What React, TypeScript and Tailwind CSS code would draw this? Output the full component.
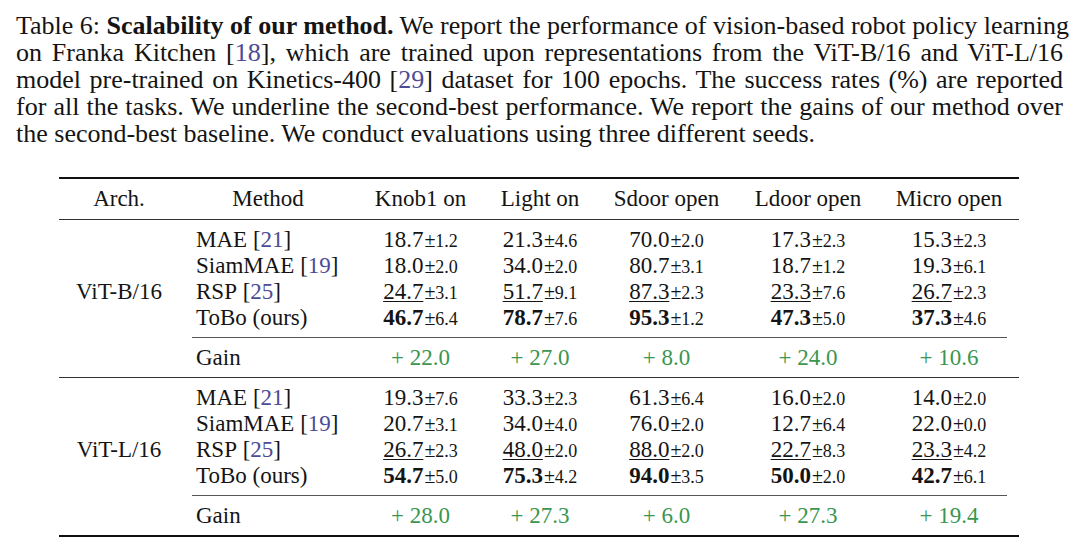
import React from "react";

type Cell = [string, string];
type Row = { m: string; c?: string; kind?: "u" | "b"; v: Cell[] };

const block1: Row[] = [
  { m: "MAE", c: "21", v: [["18.7", "1.2"], ["21.3", "4.6"], ["70.0", "2.0"], ["17.3", "2.3"], ["15.3", "2.3"]] },
  { m: "SiamMAE", c: "19", v: [["18.0", "2.0"], ["34.0", "2.0"], ["80.7", "3.1"], ["18.7", "1.2"], ["19.3", "6.1"]] },
  { m: "RSP", c: "25", kind: "u", v: [["24.7", "3.1"], ["51.7", "9.1"], ["87.3", "2.3"], ["23.3", "7.6"], ["26.7", "2.3"]] },
  { m: "ToBo (ours)", kind: "b", v: [["46.7", "6.4"], ["78.7", "7.6"], ["95.3", "1.2"], ["47.3", "5.0"], ["37.3", "4.6"]] },
];
const block2: Row[] = [
  { m: "MAE", c: "21", v: [["19.3", "7.6"], ["33.3", "2.3"], ["61.3", "6.4"], ["16.0", "2.0"], ["14.0", "2.0"]] },
  { m: "SiamMAE", c: "19", v: [["20.7", "3.1"], ["34.0", "4.0"], ["76.0", "2.0"], ["12.7", "6.4"], ["22.0", "0.0"]] },
  { m: "RSP", c: "25", kind: "u", v: [["26.7", "2.3"], ["48.0", "2.0"], ["88.0", "2.0"], ["22.7", "8.3"], ["23.3", "4.2"]] },
  { m: "ToBo (ours)", kind: "b", v: [["54.7", "5.0"], ["75.3", "4.2"], ["94.0", "3.5"], ["50.0", "2.0"], ["42.7", "6.1"]] },
];
const gain1 = ["+ 22.0", "+ 27.0", "+ 8.0", "+ 24.0", "+ 10.6"];
const gain2 = ["+ 28.0", "+ 27.3", "+ 6.0", "+ 27.3", "+ 19.4"];

const cols = "grid grid-cols-[120px_178px_127px_112px_141px_142px_140px]";

function Cite({ n }: { n: string }) {
  return (
    <>
      [<span className="text-[#4c4c96]">{n}</span>]
    </>
  );
}

function Block({ arch, rows, gain }: { arch: string; rows: Row[]; gain: string[] }) {
  return (
    <>
      <div className={`${cols} grid-rows-[repeat(4,26px)] pt-[7px] pb-[6px]`}>
        <div className="col-start-1 row-start-3 flex items-center justify-center">{arch}</div>
        {rows.map((r, i) => (
          <React.Fragment key={i}>
            <div className="col-start-2 flex items-center pl-[17px] whitespace-nowrap">
              {r.m}
              {r.c && (
                <>
                  &nbsp;
                  <Cite n={r.c} />
                </>
              )}
            </div>
            {r.v.map((v, j) => (
              <div key={j} className="flex items-baseline justify-center whitespace-nowrap">
                <span
                  className={
                    r.kind === "b"
                      ? "font-bold"
                      : r.kind === "u"
                      ? "underline decoration-1 underline-offset-[2px]"
                      : ""
                  }
                >
                  {v[0]}
                </span>
                <span className="text-[20px] ml-[1px]">±</span>
                <span className="text-[18px]">{v[1]}</span>
              </div>
            ))}
          </React.Fragment>
        ))}
      </div>
      <div className="ml-[133px] mr-[12px] border-t border-[#555]" />
      <div className={`${cols} h-[39px]`}>
        <div />
        <div className="flex items-center pl-[17px]">Gain</div>
        {gain.map((g, i) => (
          <div key={i} className="flex items-center justify-center text-[#3a9650]">
            {g}
          </div>
        ))}
      </div>
    </>
  );
}

export default function App() {
  const line = "text-justify [text-align-last:justify] whitespace-nowrap";
  return (
    <div className="w-[1080px] h-[551px] bg-white text-[#141414] font-['Liberation_Serif',serif] overflow-hidden">
      <div className="pt-[12px] pl-[16px] w-[1063px] text-[26px] leading-[27px]">
        <div className={line}>
          Table 6: <b>Scalability of our method.</b> We report the performance of vision-based robot policy learning
        </div>
        <div className={line}>
          on Franka Kitchen <Cite n="18" />, which are trained upon representations from the ViT-B/16 and ViT-L/16
        </div>
        <div className={line}>
          model pre-trained on Kinetics-400 <Cite n="29" /> dataset for 100 epochs. The success rates (%) are reported
        </div>
        <div className={line}>
          for all the tasks. We underline the second-best performance. We report the gains of our method over
        </div>
        <div className="whitespace-nowrap">
          the second-best baseline. We conduct evaluations using three different seeds.
        </div>
      </div>

      <div className="ml-[59px] mt-[30px] w-[960px] text-[23px] leading-[26px]">
        <div className="border-t-2 border-[#111]" />
        <div className={`${cols} h-[40px]`}>
          {["Arch.", "Method", "Knob1 on", "Light on", "Sdoor open", "Ldoor open", "Micro open"].map((h) => (
            <div key={h} className="flex items-center justify-center whitespace-nowrap">
              {h}
            </div>
          ))}
        </div>
        <div className="border-t border-[#333]" />
        <Block arch="ViT-B/16" rows={block1} gain={gain1} />
        <div className="border-t border-[#333]" />
        <Block arch="ViT-L/16" rows={block2} gain={gain2} />
        <div className="border-t-2 border-[#111]" />
      </div>
    </div>
  );
}
